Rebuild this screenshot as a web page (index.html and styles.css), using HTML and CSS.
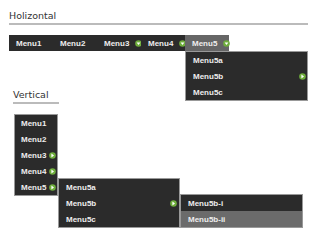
FILE: index.html
```html
<!DOCTYPE html>
<html lang="en">
<head>
  <meta charset="UTF-8">
  <title>Menus</title>
  <link rel="stylesheet" href="styles.css">
</head>
<body>
  <div class="page">
    <h2 class="title">Holizontal</h2>

    <ul class="hmenu">
      <li><a href="#">Menu1</a></li>
      <li><a href="#">Menu2</a></li>
      <li><a href="#">Menu3 <svg class="arrow" viewBox="0 0 7 7"><circle cx="3.5" cy="3.5" r="3.3" fill="#6fae3c"/><path d="M1.6 2.4H5.4L3.5 5Z" fill="#fff"/></svg></a></li>
      <li><a href="#">Menu4 <svg class="arrow" viewBox="0 0 7 7"><circle cx="3.5" cy="3.5" r="3.3" fill="#6fae3c"/><path d="M1.6 2.4H5.4L3.5 5Z" fill="#fff"/></svg></a></li>
      <li class="active"><a href="#">Menu5 <svg class="arrow" viewBox="0 0 7 7"><circle cx="3.5" cy="3.5" r="3.3" fill="#6fae3c"/><path d="M1.6 2.4H5.4L3.5 5Z" fill="#fff"/></svg></a>
        <ul class="sub">
          <li><a href="#">Menu5a</a></li>
          <li><a href="#">Menu5b <svg class="arrow end" viewBox="0 0 7 7"><circle cx="3.5" cy="3.5" r="3.3" fill="#6fae3c"/><path d="M2.4 1.6V5.4L5 3.5Z" fill="#fff"/></svg></a></li>
          <li><a href="#">Menu5c</a></li>
        </ul>
      </li>
    </ul>

    <h2 class="title short">Vertical</h2>

    <ul class="vmenu">
      <li><a href="#">Menu1</a></li>
      <li><a href="#">Menu2</a></li>
      <li><a href="#">Menu3 <svg class="arrow" viewBox="0 0 7 7"><circle cx="3.5" cy="3.5" r="3.3" fill="#6fae3c"/><path d="M2.4 1.6V5.4L5 3.5Z" fill="#fff"/></svg></a></li>
      <li><a href="#">Menu4 <svg class="arrow" viewBox="0 0 7 7"><circle cx="3.5" cy="3.5" r="3.3" fill="#6fae3c"/><path d="M2.4 1.6V5.4L5 3.5Z" fill="#fff"/></svg></a></li>
      <li><a href="#">Menu5 <svg class="arrow" viewBox="0 0 7 7"><circle cx="3.5" cy="3.5" r="3.3" fill="#6fae3c"/><path d="M2.4 1.6V5.4L5 3.5Z" fill="#fff"/></svg></a>
        <ul class="sub">
          <li><a href="#">Menu5a</a></li>
          <li><a href="#">Menu5b <svg class="arrow end" viewBox="0 0 7 7"><circle cx="3.5" cy="3.5" r="3.3" fill="#6fae3c"/><path d="M2.4 1.6V5.4L5 3.5Z" fill="#fff"/></svg></a>
            <ul class="sub sub2">
              <li><a href="#">Menu5b-i</a></li>
              <li class="active"><a href="#">Menu5b-ii</a></li>
            </ul>
          </li>
          <li><a href="#">Menu5c</a></li>
        </ul>
      </li>
    </ul>
  </div>
</body>
</html>
```

FILE: styles.css
```css
html, body {
  margin: 0;
  padding: 0;
  background: #fff;
  font-family: "Liberation Sans", Arial, sans-serif;
}

body {
  min-height: 240px;
}

.page {
  padding: 10px 12px 50px 9px;
}

/* section headings */
.title {
  margin: 0;
  padding: 0 0 1px 0;
  font: normal 9.5px/12px "DejaVu Sans", Verdana, sans-serif;
  color: #333;
  border-bottom: 2px solid #bbb;
}

.title.short {
  display: inline-block;
  margin: 38px 0 0 4px;
  padding-right: 10px;
}

ul {
  list-style: none;
  margin: 0;
  padding: 0;
}

li {
  position: relative;
}

li a {
  display: flex;
  align-items: center;
  height: 16px;
  color: #eee;
  font-size: 8px;
  font-weight: bold;
  text-decoration: none;
  white-space: nowrap;
}

.arrow {
  width: 7px;
  height: 7px;
  flex: none;
}

/* horizontal bar */
.hmenu {
  display: flex;
  margin-top: 10px;
}

.hmenu > li {
  width: 44px;
  background: #2b2b2b;
}

.hmenu > li > a {
  padding-left: 7px;
}

.hmenu > li > a .arrow {
  margin-left: 6px;
}

.hmenu > li.active {
  background: #666;
}

/* dropdowns */
.sub {
  position: absolute;
  left: 0;
  top: 100%;
  width: 121px;
  background: #2b2b2b;
  border: 1px solid #999;
  z-index: 2;
}

.sub li a {
  padding-left: 7px;
}

.sub .arrow.end {
  margin-left: auto;
  margin-right: 1px;
}

.sub li.active {
  background: #6b6b6b;
}

/* vertical menu */
.vmenu {
  width: 42px;
  margin: 10px 0 0 5px;
  background: #2b2b2b;
  border: 1px solid #999;
}

.vmenu > li > a {
  padding-left: 6px;
}

.vmenu > li > a .arrow {
  margin-left: 3px;
}

.vmenu .sub {
  left: calc(100% + 1px);
  top: -1px;
  width: 120px;
}

.vmenu .sub .arrow.end {
  margin-right: 2px;
}

.vmenu .sub2 {
  top: -1px;
  width: 121px;
}
```
